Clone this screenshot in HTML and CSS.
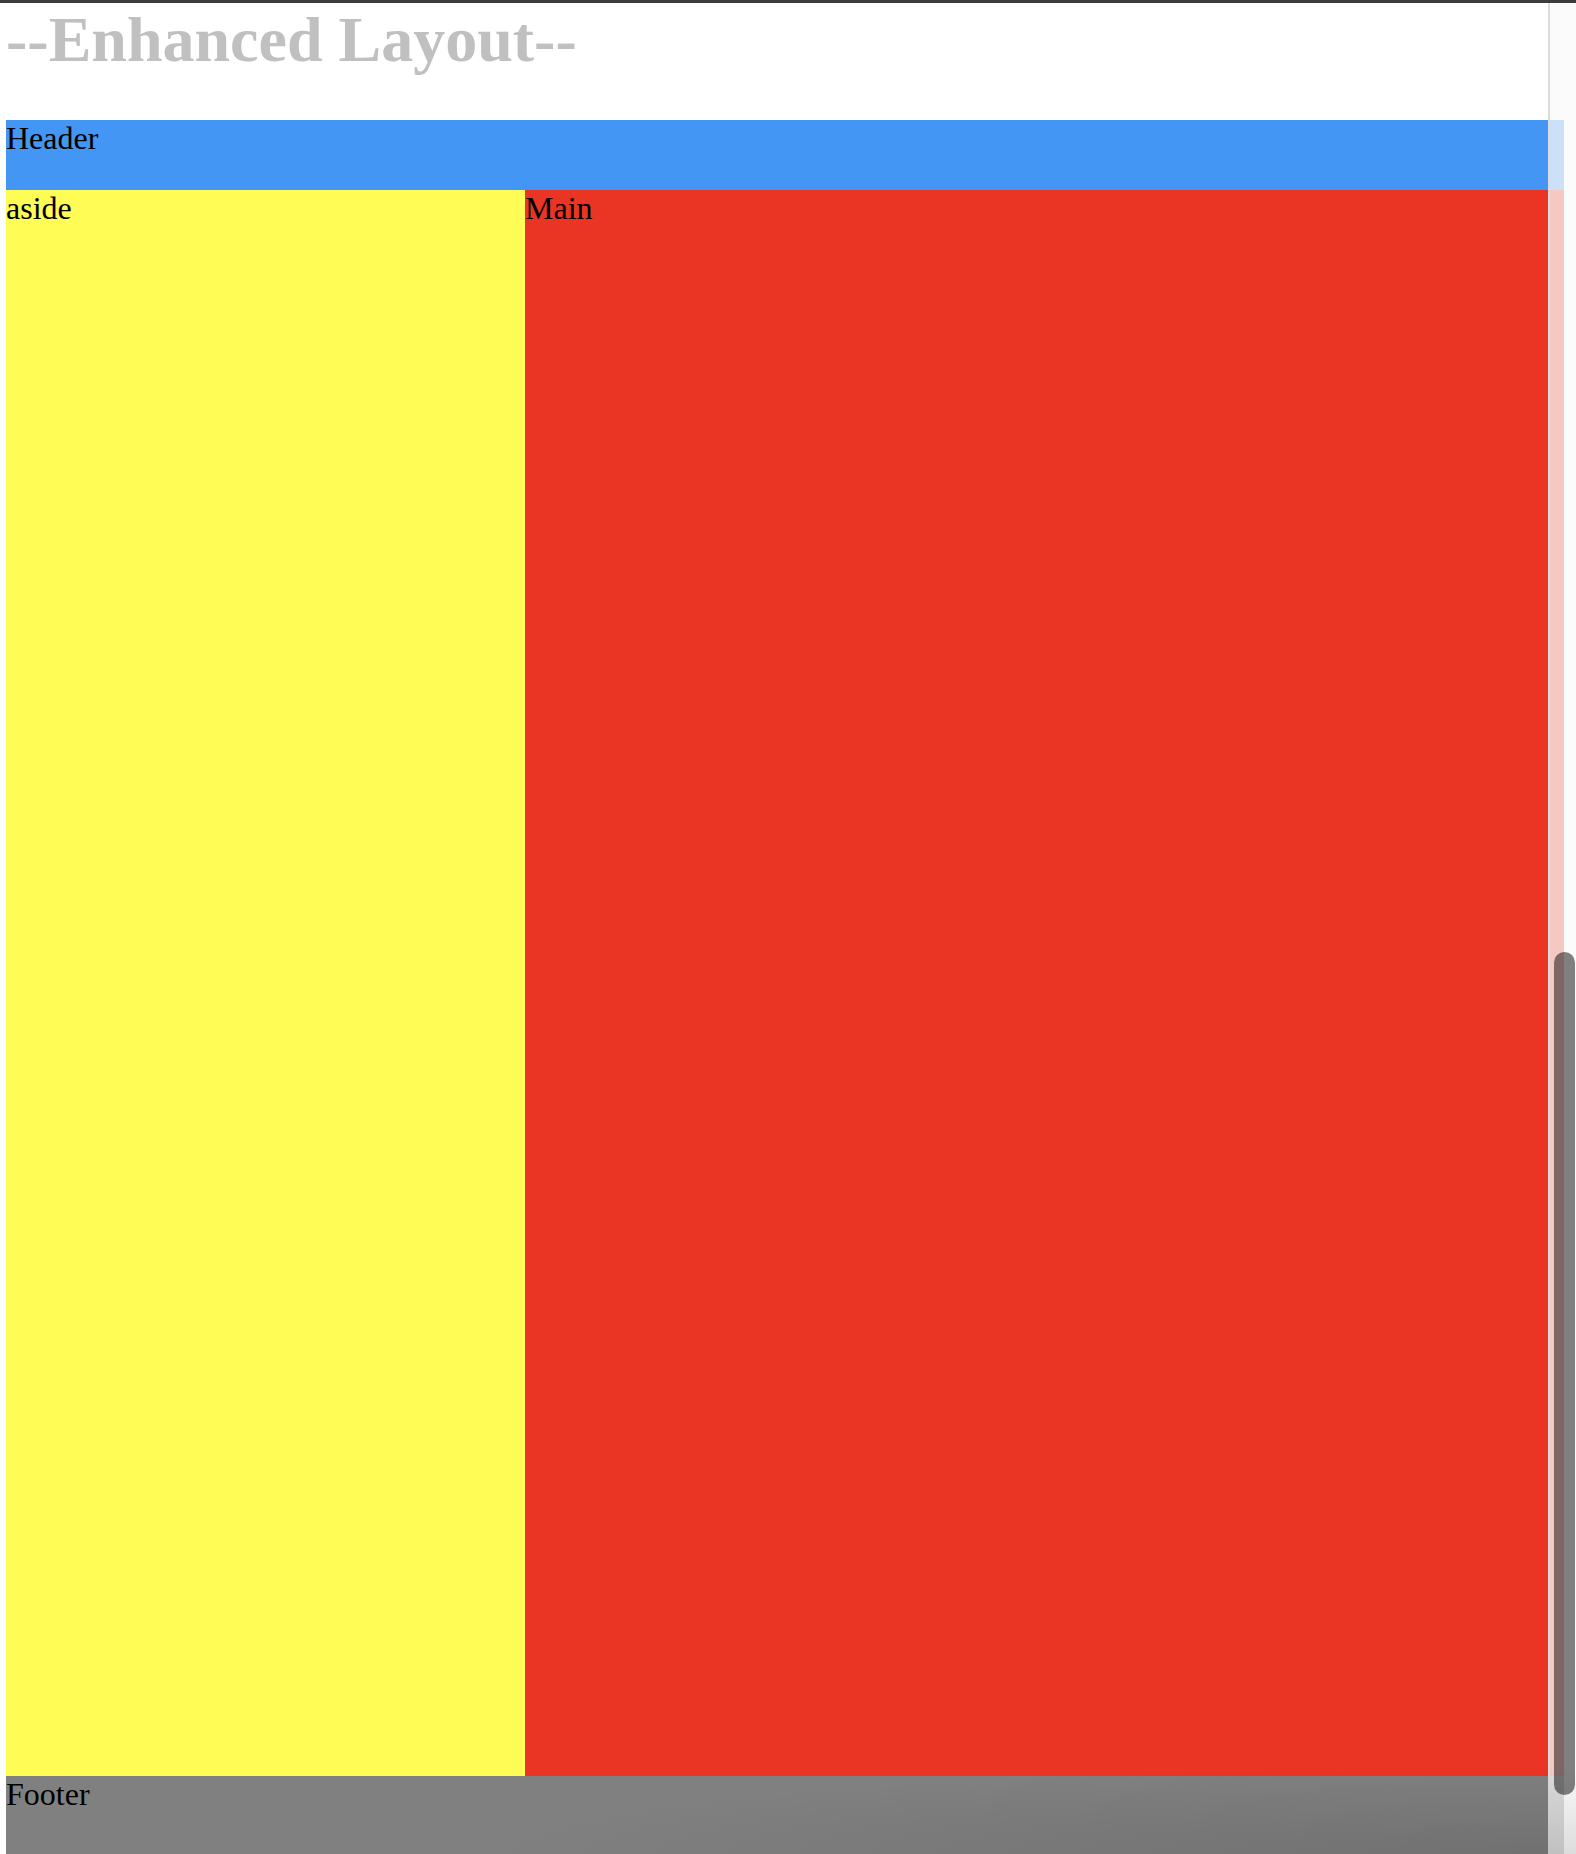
FILE: index.html
```html
<!DOCTYPE html>
<html lang="en">
<head>
<meta charset="utf-8">
<title>Enhanced Layout</title>
<link rel="stylesheet" href="styles.css">
</head>
<body>
<div class="topbar"></div>
<div class="page">
  <h1 class="title">--Enhanced Layout--</h1>
  <header class="header">Header</header>
  <div class="middle">
    <aside class="aside">aside</aside>
    <main class="main">Main</main>
  </div>
  <footer class="footer">Footer</footer>
</div>
<div class="scrollbar"><div class="thumb"></div></div>
<div class="vignette"></div>
</body>
</html>
```

FILE: styles.css
```css
html, body {
  margin: 0;
  padding: 0;
  height: 100%;
  overflow: hidden;
  background: #ffffff;
}

body {
  position: relative;
  font-family: "Liberation Serif", "Times New Roman", serif;
  color: #000000;
}

.topbar {
  height: 3px;
  background: #3c3c3c;
}

.page {
  width: 1558px;
  padding-left: 6px;
}

.title {
  margin: 0 0 44px;
  font-size: 64px;
  line-height: 73px;
  font-weight: bold;
  color: #c0c0c0;
}

.header,
.aside,
.main,
.footer {
  font-size: 32px;
}

.header {
  height: 70px;
  background: #4496f4;
}

.middle {
  display: flex;
  height: 1586px;
}

.aside {
  width: 519px;
  background: #fffd55;
}

.main {
  flex: 1;
  background: #ea3424;
}

.footer {
  height: 78px;
  background: #808080;
}

.scrollbar {
  position: absolute;
  top: 3px;
  right: 0;
  bottom: 0;
  width: 26px;
  border-left: 2px solid #dcdcdc;
  background: rgba(250, 250, 250, 0.75);
}

.thumb {
  position: absolute;
  top: 949px;
  left: 4px;
  width: 21px;
  height: 843px;
  border-radius: 11px;
  background: rgba(0, 0, 0, 0.49);
}

.vignette {
  position: absolute;
  right: 0;
  bottom: 0;
  width: 1100px;
  height: 90px;
  pointer-events: none;
  background: radial-gradient(ellipse 1100px 90px at 100% 100%, rgba(0, 0, 0, 0.12), rgba(0, 0, 0, 0));
}
```
